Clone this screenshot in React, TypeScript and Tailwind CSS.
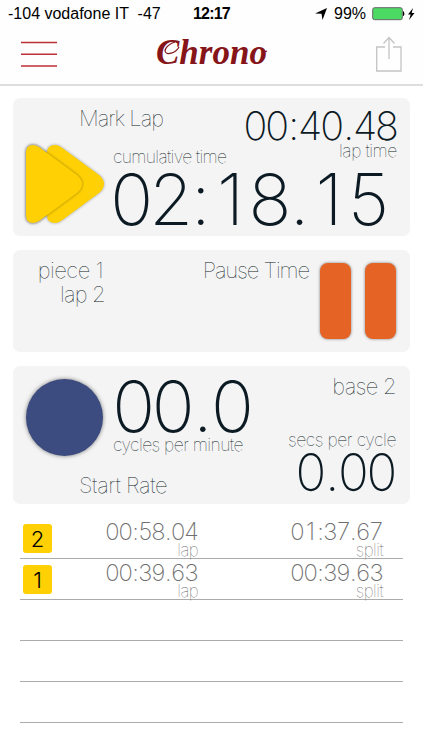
import React from "react";

function Txt({ className = "", children }: { className?: string; children: React.ReactNode }) {
  return <span className={"block whitespace-nowrap " + className}>{children}</span>;
}

function Digits({ value, className = "" }: { value: string; className?: string }) {
  return (
    <div className={"flex whitespace-nowrap " + className}>
      {value.split("").map((c, i) => (
        <span key={i} className={c === ":" || c === "." ? "flex w-[0.278em] justify-center" : "flex w-[0.556em] justify-center"}>
          {c}
        </span>
      ))}
    </div>
  );
}

function LapIcon() {
  return (
    <svg width="84" height="88" viewBox="0 0 84 88" className="block shrink-0 drop-shadow-[0_0_1.5px_rgba(0,0,0,0.35)]">
      <path d="M25 12 Q25 4 33 4 Q36 4 39 6 L77 34 Q82 38 82 43 Q82 48 77 52 L39 80 Q36 82 33 82 Q25 82 25 74 Z" fill="#ffd105" />
      <path
        d="M4 12 Q4 4 11 4 Q14 4 17 6 L55 34 Q60 38 60 43 Q60 48 55 52 L17 80 Q14 82 11 82 Q4 82 4 74 Z"
        fill="#ffd105"
        className="drop-shadow-[0_0_1.5px_rgba(0,0,0,0.4)]"
      />
    </svg>
  );
}

function Row({ n, lap, split }: { n?: string; lap?: string; split?: string }) {
  return (
    <div className="flex h-[41px] border-b border-[#ababab]">
      {n && lap && split && (
        <>
          <div className="ml-[3px] mt-[6px] flex h-[29px] w-[29px] items-center justify-center rounded-[3px] bg-[#ffd105] text-[22px] font-light leading-none text-black">
            {n}
          </div>
          <div className="flex w-[146px] flex-col items-end">
            <Digits value={lap} className="mt-[2px] text-[23.7px] font-extralight leading-[24px] text-[#707070]" />
            <Txt className="text-[17px] font-thin leading-[13px] tracking-[-0.6px] text-[#666]">lap</Txt>
          </div>
          <div className="flex w-[185px] flex-col items-end">
            <Digits value={split} className="mt-[2px] text-[23.7px] font-extralight leading-[24px] text-[#707070]" />
            <Txt className="text-[17px] font-thin leading-[13px] tracking-[-0.5px] text-[#666]">split</Txt>
          </div>
        </>
      )}
    </div>
  );
}

export default function App() {
  return (
    <div className="h-[750px] w-[423px] overflow-hidden bg-white font-['Inter',sans-serif] text-[#0c1a24]">
      <header className="h-[86px] border-b-2 border-[#dedede] bg-[#fefefe]">
        <div className="flex h-[28px] items-center font-['Liberation_Sans',sans-serif] text-[15px] leading-none text-black">
          <Txt className="ml-[8px] w-[185px] whitespace-pre text-[16px]">-104 vodafone IT  -47</Txt>
          <Txt className="w-[121px] text-[16px] font-bold tracking-[-0.8px]">12:17</Txt>
          <svg width="14" height="14" viewBox="0 0 14 14" className="shrink-0">
            <path d="M13 1 L8.5 13 L7.5 6.8 L1 6.4 Z" fill="#000" />
          </svg>
          <Txt className="ml-[6px] w-[38px] text-[16px]">99%</Txt>
          <svg width="46" height="14" viewBox="0 0 46 14" className="shrink-0">
            <rect x=".7" y=".7" width="29.6" height="12" rx="1.8" fill="#4cd964" stroke="#666" />
            <path d="M31 4.2 h.6 q1.6 2.4 0 4.8 h-.6z" fill="#000" />
            <path d="M41 1 L36 7.5 H38.7 L37 13 L42.5 6 H39.7 Z" fill="#000" />
          </svg>
        </div>
        <div className="flex h-[56px] items-start pl-[21px]">
          <svg width="36" height="28" viewBox="0 0 36 28" className="mt-[12px] shrink-0" stroke="#bd3039" strokeWidth="1.4">
            <path d="M0 2.5 H36 M0 14.2 H36 M0 26 H36" />
          </svg>
          <div className="relative ml-[99px] mt-[8px] w-[114px]">
            <Txt className="font-['Liberation_Serif',serif] text-[35px] font-bold italic leading-[34px] text-[#851519]">Chrono</Txt>
            <svg width="120" height="34" viewBox="0 0 120 34" className="absolute -left-[2px] top-0" fill="none" stroke="#851519" strokeWidth="1.2">
              <path d="M25 11 C22 17 12 20 11 15 C11 11 17 7 21 6 M109 15 Q111 16 113 15" />
            </svg>
          </div>
          <svg width="28" height="38" viewBox="0 0 28 38" fill="none" stroke="#c4c4c4" strokeWidth="1.3" className="ml-[105px] mt-[7px]">
            <path d="M10 12 H1.7 V36 H26 V12 H18 M14 24 V3 M8.5 8.5 L14 2.5 L19.5 8.5" />
          </svg>
        </div>
      </header>

      <main className="pl-[13px] pr-[13px] pt-[12px]">
        <section className="h-[138px] rounded-[7px] bg-[#f4f4f4]">
          <div className="flex h-[43px] justify-between pl-[66px] pr-[12px]">
            <Txt className="mt-[8px] text-[22px] font-thin leading-[24px] tracking-[-1px]">Mark Lap</Txt>
            <Digits value="00:40.48" className="mt-[8px] text-[39.5px] font-extralight leading-[41px]" />
          </div>
          <div className="flex pl-[9px]">
            <LapIcon />
            <div className="ml-[7px] w-[284px]">
              <div className="flex h-[28px] items-start justify-between">
                <Txt className="mt-[6px] text-[17.5px] font-thin leading-[20px] tracking-[-0.65px]">cumulative time</Txt>
                <Txt className="text-[17.5px] font-thin leading-[20px] tracking-[-0.4px]">lap time</Txt>
              </div>
              <Digits value="02:18.15" className="-ml-px text-[71px] font-[240] leading-[60px]" />
            </div>
          </div>
        </section>

        <section className="mt-[14px] flex h-[102px] rounded-[7px] bg-[#f4f4f4]">
          <div className="flex w-[92px] flex-col items-end pt-[8px]">
            <Txt className="mr-[2px] text-[22px] font-thin leading-[24px] tracking-[-0.5px]">piece 1</Txt>
            <Txt className="text-[22px] font-thin leading-[24px] tracking-[-0.8px]">lap 2</Txt>
          </div>
          <Txt className="w-[204px] pt-[8px] text-right text-[22px] font-thin leading-[24px] tracking-[-1.1px]">Pause Time</Txt>
          <div className="ml-[11px] mt-[13px] flex gap-[14px]">
            <div className="h-[76px] w-[31px] rounded-[8px] bg-[#e56425] shadow-[0_0_3px_rgba(0,0,0,0.5)]" />
            <div className="h-[76px] w-[31px] rounded-[8px] bg-[#e56425] shadow-[0_0_3px_rgba(0,0,0,0.5)]" />
          </div>
        </section>

        <section className="mt-[14px] flex h-[138px] rounded-[7px] bg-[#f4f4f4]">
          <div className="flex w-[245px] flex-col">
            <div className="flex h-[107px]">
              <div className="ml-[13px] mt-[13px] h-[77px] w-[77px] shrink-0 rounded-full bg-[#3c4c80] shadow-[0_0_4px_rgba(0,0,0,0.5)]" />
              <div className="ml-[10px]">
                <Digits value="00.0" className="ml-px mt-[10px] text-[71px] font-[240] leading-[60px]" />
                <Txt className="text-[17.5px] font-thin leading-[17px] tracking-[-0.55px]">cycles per minute</Txt>
              </div>
            </div>
            <Txt className="ml-[66px] text-[22px] font-thin leading-[24px] tracking-[-0.4px]">Start Rate</Txt>
          </div>
          <div className="flex w-[138px] flex-col items-end">
            <Txt className="mt-[8px] text-[22px] font-thin leading-[24px] tracking-[-0.7px]">base 2</Txt>
            <Txt className="mt-[32px] text-[17.5px] font-thin leading-[20px] tracking-[-0.4px]">secs per cycle</Txt>
            <Digits value="0.00" className="text-[51px] font-[250] leading-[45px]" />
          </div>
        </section>
      </main>

      <div className="mt-[14px] px-[20px]">
        <Row n="2" lap="00:58.04" split="01:37.67" />
        <Row n="1" lap="00:39.63" split="00:39.63" />
        <Row />
        <Row />
        <Row />
      </div>
    </div>
  );
}
